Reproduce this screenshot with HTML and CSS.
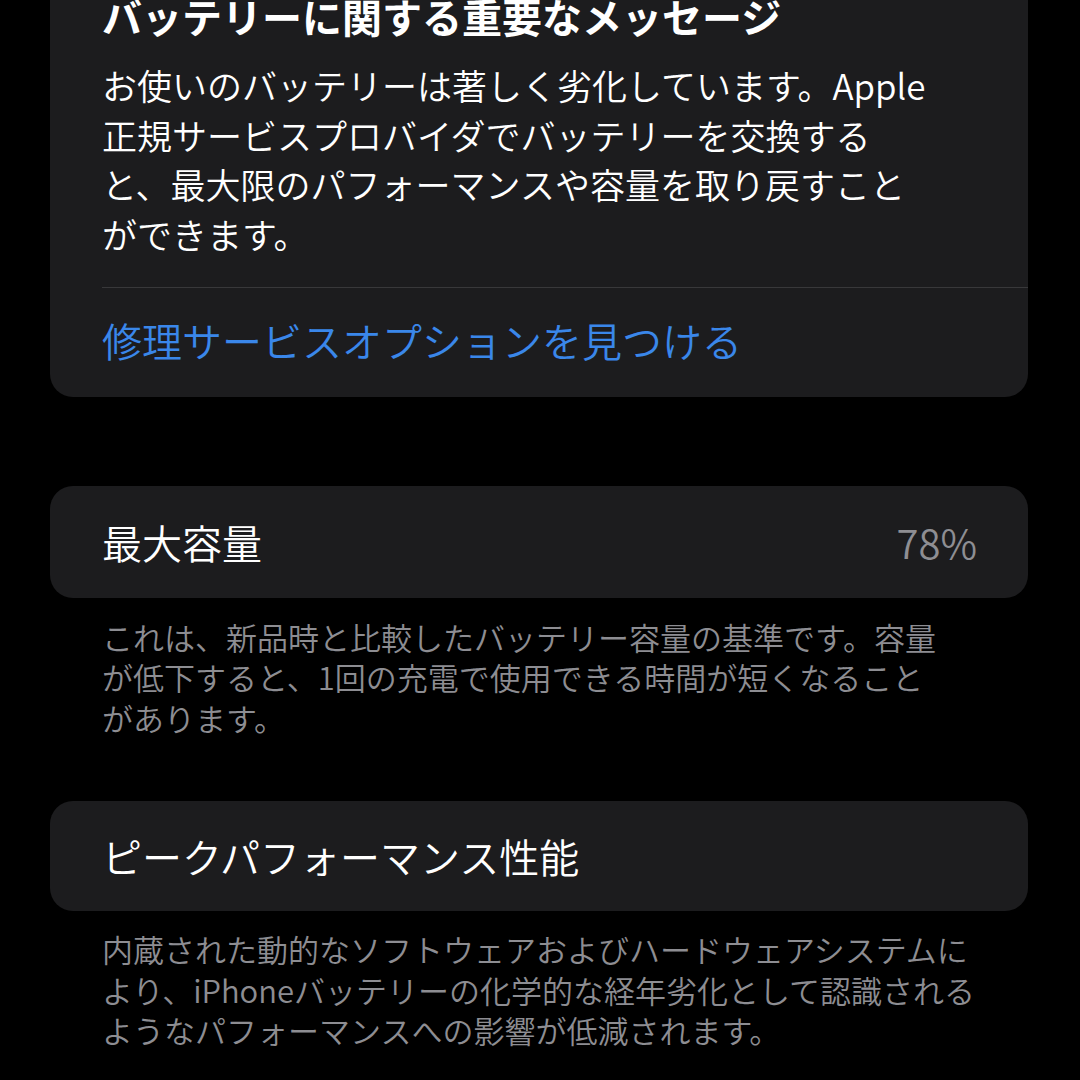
FILE: index.html
```html
<!DOCTYPE html>
<html lang="ja">
<head>
<meta charset="utf-8">
<title>バッテリーの状態</title>
<link rel="stylesheet" href="styles.css">
</head>
<body>
<main class="page">
  <section class="card message-card">
    <div class="message-body">
      <h1 class="message-title">バッテリーに関する重要なメッセージ</h1>
      <p class="message-text">お使いのバッテリーは著しく劣化しています。Apple<br>正規サービスプロバイダでバッテリーを交換する<br>と、最大限のパフォーマンスや容量を取り戻すこと<br>ができます。</p>
    </div>
    <div class="link-row">
      <span class="link-text">修理サービスオプションを見つける</span>
    </div>
  </section>

  <section class="card row-card capacity-card">
    <span class="row-label">最大容量</span>
    <span class="row-value">78%</span>
  </section>
  <p class="footnote footnote-capacity">これは、新品時と比較したバッテリー容量の基準です。容量<br>が低下すると、1回の充電で使用できる時間が短くなること<br>があります。</p>

  <section class="card row-card peak-card">
    <span class="row-label">ピークパフォーマンス性能</span>
  </section>
  <p class="footnote footnote-peak">内蔵された動的なソフトウェアおよびハードウェアシステムに<br>より、iPhoneバッテリーの化学的な経年劣化として認識される<br>ようなパフォーマンスへの影響が低減されます。</p>
</main>
</body>
</html>
```

FILE: styles.css
```css
html, body {
  margin: 0;
  padding: 0;
  background: #000;
}

body {
  width: 1080px;
  height: 1080px;
  overflow: hidden;
  font-family: "Noto Sans CJK JP", "Noto Sans", sans-serif;
  font-weight: 350;
  color: #fff;
}

.page {
  display: flex;
  flex-direction: column;
  padding: 0 52px 0 50px;
}

.card {
  background: #1c1c1e;
  border-radius: 23px;
}

.message-card {
  margin-top: -40px;
  padding: 32px 0 32px 52px;
}

.message-body {
  padding-right: 51px;
  padding-bottom: 28px;
  border-bottom: 1px solid #38383a;
}

.message-title {
  margin: 0;
  font-size: 40px;
  font-weight: 700;
  line-height: 48px;
  white-space: nowrap;
}

.message-text {
  margin: 20px 0 0;
  font-size: 35px;
  line-height: 49.7px;
  white-space: nowrap;
}

.link-row {
  padding-top: 27px;
  padding-right: 51px;
}

.link-text {
  display: block;
  font-size: 40px;
  line-height: 50px;
  color: #3a87ea;
  white-space: nowrap;
}

.row-card {
  display: flex;
  align-items: center;
  justify-content: space-between;
  padding: 0 51px 0 52px;
}

.capacity-card {
  margin-top: 89px;
  height: 112px;
}

.peak-card {
  margin-top: 63px;
  height: 110px;
}

.row-label {
  font-size: 40px;
  line-height: 50px;
  white-space: nowrap;
}

.row-value {
  font-size: 40px;
  line-height: 50px;
  color: #8e8e93;
}

.footnote {
  margin: 19px 0 0;
  padding-left: 52px;
  font-size: 31px;
  line-height: 40.5px;
  color: #8d8d92;
  white-space: nowrap;
}

.footnote-peak {
  margin-top: 18px;
}
```
